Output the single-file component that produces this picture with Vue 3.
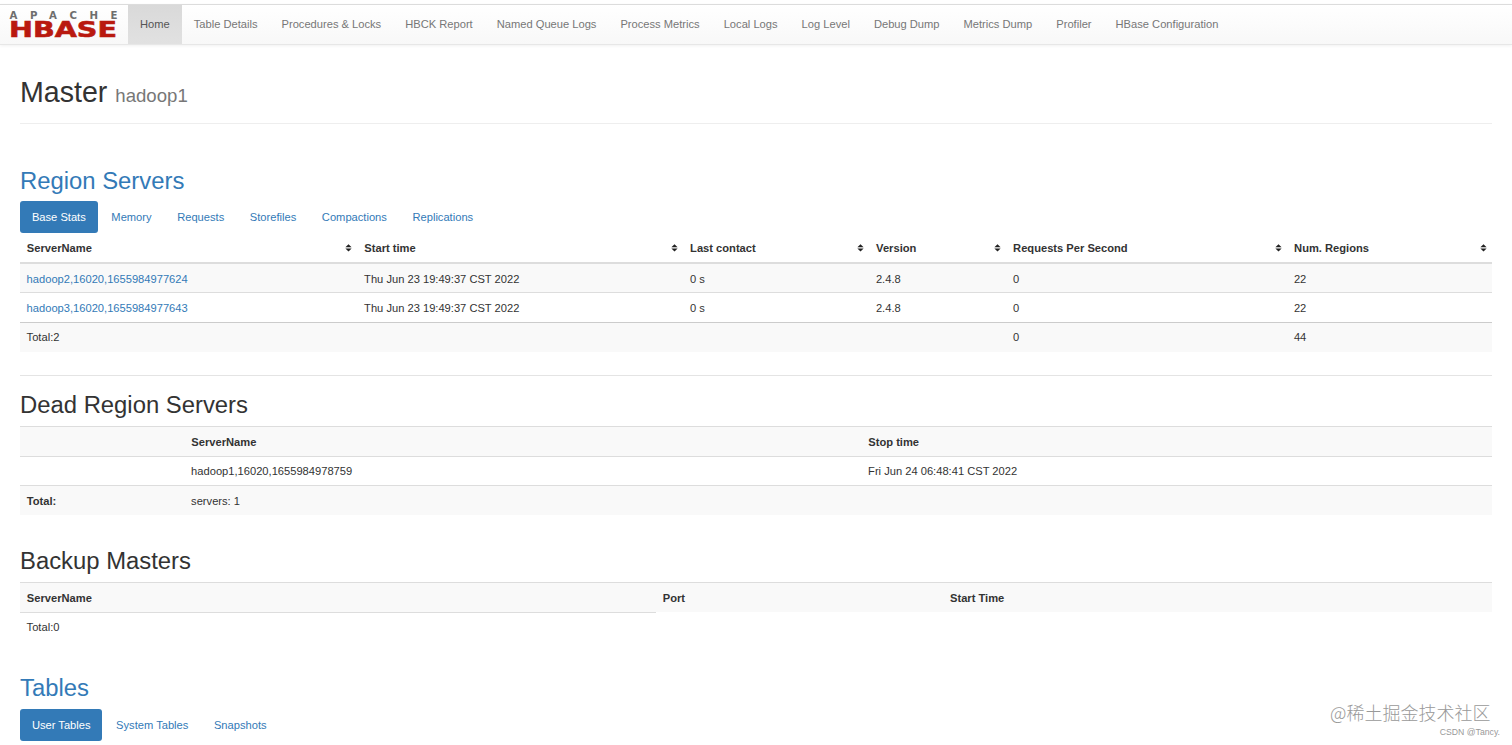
<script setup>
const nav = [
  'Home', 'Table Details', 'Procedures & Locks', 'HBCK Report', 'Named Queue Logs',
  'Process Metrics', 'Local Logs', 'Log Level', 'Debug Dump', 'Metrics Dump', 'Profiler',
  'HBase Configuration',
]
const statTabs = ['Base Stats', 'Memory', 'Requests', 'Storefiles', 'Compactions', 'Replications']
const tableTabs = ['User Tables', 'System Tables', 'Snapshots']
const columns = ['ServerName', 'Start time', 'Last contact', 'Version', 'Requests Per Second', 'Num. Regions']
const servers = [
  { name: 'hadoop2,16020,1655984977624', start: 'Thu Jun 23 19:49:37 CST 2022', contact: '0 s', version: '2.4.8', rps: 0, regions: 22 },
  { name: 'hadoop3,16020,1655984977643', start: 'Thu Jun 23 19:49:37 CST 2022', contact: '0 s', version: '2.4.8', rps: 0, regions: 22 },
]
</script>

<template>
  <div class="page">
    <nav class="navbar">
      <a class="brand">
        <svg width="110" height="32" viewBox="0 0 110 32" role="img" aria-label="Apache HBase">
          <text class="apache" x="0.5" y="8.6" textLength="108">APACHE</text>
          <text class="hbase" x="0" y="27.2" textLength="108" lengthAdjust="spacingAndGlyphs">HBASE</text>
        </svg>
      </a>
      <a v-for="(item, i) in nav" :key="item" class="nav-item" :class="{ active: i === 0 }">{{ item }}</a>
    </nav>

    <main class="content">
      <h1>Master <small>hadoop1</small></h1>

      <section class="regions">
        <h2 class="link">Region Servers</h2>
        <div class="pills">
          <a v-for="(t, i) in statTabs" :key="t" :class="{ active: i === 0 }">{{ t }}</a>
        </div>
        <table class="stats">
          <thead>
            <tr>
              <th v-for="c in columns" :key="c">
                {{ c }}
                <svg class="sort" width="7" height="8" viewBox="0 0 7 8">
                  <path d="M3.5 0.2 6.6 3.2H0.4ZM0.4 4.6H6.6L3.5 7.6Z" />
                </svg>
              </th>
            </tr>
          </thead>
          <tbody>
            <tr v-for="s in servers" :key="s.name">
              <td><a>{{ s.name }}</a></td>
              <td>{{ s.start }}</td>
              <td>{{ s.contact }}</td>
              <td>{{ s.version }}</td>
              <td>{{ s.rps }}</td>
              <td>{{ s.regions }}</td>
            </tr>
          </tbody>
          <tfoot>
            <tr><td>Total:2</td><td></td><td></td><td></td><td>0</td><td>44</td></tr>
          </tfoot>
        </table>
      </section>

      <section class="dead">
        <h2>Dead Region Servers</h2>
        <table>
          <tbody>
            <tr><th></th><th>ServerName</th><th>Stop time</th></tr>
            <tr><td></td><td>hadoop1,16020,1655984978759</td><td>Fri Jun 24 06:48:41 CST 2022</td></tr>
            <tr><th>Total:</th><td>servers: 1</td><td></td></tr>
          </tbody>
        </table>
      </section>

      <section class="backup">
        <h2>Backup Masters</h2>
        <table>
          <tbody>
            <tr><th>ServerName</th><th>Port</th><th>Start Time</th></tr>
            <tr><td>Total:0</td></tr>
          </tbody>
        </table>
      </section>

      <section class="tables">
        <h2 class="link">Tables</h2>
        <div class="pills">
          <a v-for="(t, i) in tableTabs" :key="t" :class="{ active: i === 0 }">{{ t }}</a>
        </div>
      </section>
    </main>

    <div class="watermark">@稀土掘金技术社区</div>
    <div class="credit">CSDN @Tancy.</div>
  </div>
</template>

<style>
body { margin: 0; background: #fff; overflow: hidden; }
</style>

<style scoped>
.page {
  position: relative;
  box-sizing: border-box;
  height: 745px;
  padding-top: 4px;
  overflow: hidden;
  font-family: "Liberation Sans", Arial, sans-serif;
  font-size: 11.15px;
  line-height: 16px;
  color: #333;
}
.navbar {
  display: flex;
  box-sizing: border-box;
  height: 41px;
  border-top: 1px solid #dcdcdc;
  border-bottom: 1px solid #e7e7e7;
  background: linear-gradient(#fff, #f8f8f8);
  box-shadow: 0 1px 3px rgba(0, 0, 0, 0.06);
}
.brand { width: 128px; box-sizing: border-box; padding: 5px 0 0 9px; }
.brand svg { display: block; }
.apache { font: bold 10.2px "DejaVu Sans", sans-serif; fill: #6e6e6e; }
.hbase {
  font: bold 22px "DejaVu Sans", sans-serif;
  fill: #b9190f;
  stroke: #b9190f;
  stroke-width: 0.6;
}
.nav-item { padding: 11.4px 12px 0; color: #777; white-space: nowrap; }
.nav-item.active { color: #555; background: linear-gradient(#d9d9d9, #e1e1e1); }

.content { padding: 0 20px; }
h1, h2 { margin: 0; font-weight: 400; white-space: nowrap; }
h1 {
  box-sizing: border-box;
  height: 79px;
  padding-top: 31px;
  border-bottom: 1px solid #eee;
  font-size: 28.6px;
  line-height: 32px;
}
h1 small { font-size: 18.6px; color: #777; }
h2 { font-size: 23.85px; line-height: 28px; }
a, .link { color: #337ab7; }

.regions { padding-top: 43px; height: 208px; border-bottom: 1px solid #e4e4e4; }
.regions h2 { height: 34.4px; }
.pills { display: flex; gap: 1.8px; height: 32px; }
.pills a { padding: 8px 11.9px; border-radius: 3px; }
.pills .active { color: #fff; background: #337ab7; }

table, thead, tbody, tfoot { display: block; }
tr {
  display: grid;
  box-sizing: border-box;
  height: 29.7px;
  border-top: 1px solid #ddd;
}
th, td { padding: 6.4px 6.6px 0; text-align: left; white-space: nowrap; }
th { font-weight: 700; padding-left: 6.8px; }
tbody tr:nth-child(odd), tfoot tr { background: #f9f9f9; }

.stats tr { grid-template-columns: 337.5px 325.8px 186px 137px 281px 1fr; }
.stats thead tr { height: 29px; border-top: 0; }
.stats th { display: flex; justify-content: space-between; padding-right: 5.5px; }
.stats tbody tr:first-child { height: 29.9px; border-top: 2px solid #ddd; }
.stats tfoot tr { border-top-color: #ccc; }
.sort { display: block; margin-top: 4px; fill: #222; }

.dead { padding-top: 15px; height: 141px; }
.dead h2, .backup h2 { height: 35.3px; }
.dead tr { grid-template-columns: 164.5px 677px 1fr; height: 29.55px; }
.backup { padding-top: 15px; height: 112px; }
.backup tr { grid-template-columns: 636px 287.2px 1fr; }
.backup tr:last-child { border-top: 0; }
.backup tr:last-child td { border-top: 1px solid #ddd; }
.tables { padding-top: 14.5px; }
.tables h2 { height: 35px; }

.watermark, .credit { position: absolute; white-space: nowrap; color: #999; }
.watermark {
  right: 21.5px;
  top: 699px;
  font: 300 18px/26px "Noto Sans CJK SC", sans-serif;
}
.credit { right: 12px; top: 726px; font-size: 8.7px; line-height: 12px; }
</style>
